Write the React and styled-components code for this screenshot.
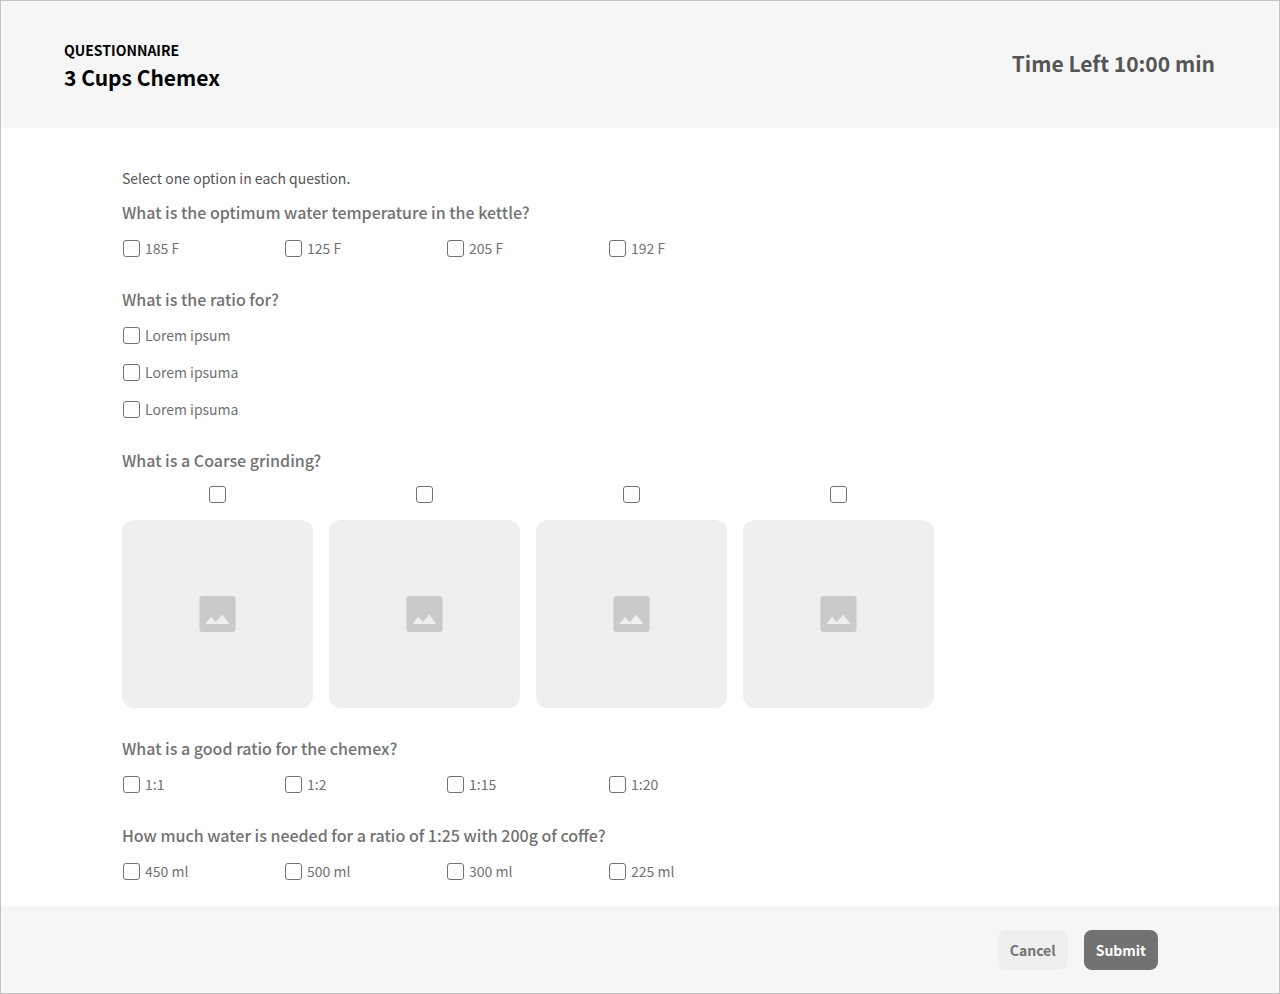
import React from "react";
import styled, { createGlobalStyle } from "styled-components";

const Global = createGlobalStyle`
  *, *::before, *::after { box-sizing: border-box; }
  body { margin: 0; background: #fff; color: #727272; font-family: "Noto Sans CJK SC", "Noto Sans", sans-serif; font-size: 14px; line-height: 20px; }
  h1, h2, p { margin: 0; }
`;
const Page = styled.div`
  min-height: 100vh;
  display: flex;
  flex-direction: column;
  border: 1px solid #c4c4c4;
`;
const Header = styled.header`
  display: flex;
  justify-content: space-between;
  align-items: flex-start;
  padding: 39px 64px 34px 63px;
  background: #f6f6f6;
`;
const Eyebrow = styled.p`
  color: #000;
  font-size: 14px;
  font-weight: 700;
  line-height: 20px;
`;
const Title = styled.h1`
  color: #000;
  font-size: 21px;
  font-weight: 700;
  line-height: 34px;
`;
const Timer = styled.p`
  color: #555;
  font-size: 21px;
  font-weight: 700;
  line-height: 46px;
`;
const Form = styled.form`
  flex: 1;
  display: flex;
  flex-direction: column;
`;
const Questions = styled.main`
  flex: 1;
  padding: 40px 121px 16px;
`;
const Intro = styled.p`
  color: #555;
  margin-bottom: 12px;
`;
const Question = styled.fieldset`
  border: 0;
  margin: 0 0 27px;
  padding: 0;
  min-width: 0;
  &:last-child { margin-bottom: 0; }
`;
const Prompt = styled.legend`
  padding: 0;
  margin-bottom: 12px;
  font-size: 16px;
  font-weight: 500;
  line-height: 24px;
`;
const Options = styled.div`
  display: flex;
  flex-direction: ${(p) => (p.$stacked ? "column" : "row")};
  gap: ${(p) => (p.$stacked ? "13px" : "0")};
`;
const Option = styled.label`
  display: flex;
  align-items: center;
  gap: 5px;
  width: 162px;
  height: 24px;
  padding-left: 1px;
`;
const Check = styled.input`
  appearance: none;
  flex: none;
  width: 17px;
  height: 17px;
  margin: 0;
  border: 1px solid #727272;
  border-radius: 3px;
  background: #fff;
  &:checked { background: #727272; }
`;
const Pictures = styled.div`
  display: flex;
  gap: 16px;
  padding: 2px 0 1px;
`;
const Picture = styled.label`
  display: flex;
  flex-direction: column;
  align-items: center;
  gap: 17px;
  width: 191px;
`;
const Placeholder = styled.span`
  display: flex;
  align-items: center;
  justify-content: center;
  width: 100%;
  height: 188px;
  border-radius: 12px;
  background: #efefef;
`;
const Footer = styled.footer`
  display: flex;
  justify-content: flex-end;
  gap: 16px;
  padding: 24px 121px 23px;
  background: #f6f6f6;
`;
const Button = styled.button`
  height: 40px;
  padding: 0 12px;
  border: 0;
  border-radius: 8px;
  background: ${(p) => (p.$primary ? "#727272" : "#efefef")};
  color: ${(p) => (p.$primary ? "#fff" : "#727272")};
  font: inherit;
  font-weight: 700;
`;

function ImageIcon() {
  return (
    <svg width="37" height="36" viewBox="0 0 37 36" aria-hidden="true">
      <rect x="0.4" width="36.2" height="36" rx="3" fill="#cacaca" />
      <path d="M6.4 28L12.2 20.7L16.6 26.2L23.3 18.6L30.4 28Z" fill="#efefef" />
    </svg>
  );
}

function ChoiceQuestion({ name, prompt, options, stacked }) {
  return (
    <Question>
      <Prompt>{prompt}</Prompt>
      <Options $stacked={stacked}>
        {options.map((text, i) => (
          <Option key={i} htmlFor={`${name}-${i}`}>
            <Check type="checkbox" id={`${name}-${i}`} name={name} />
            {text}
          </Option>
        ))}
      </Options>
    </Question>
  );
}

function PictureQuestion({ name, prompt, count }) {
  return (
    <Question>
      <Prompt>{prompt}</Prompt>
      <Pictures>
        {Array.from({ length: count }, (_, i) => (
          <Picture key={i} htmlFor={`${name}-${i}`}>
            <Check type="checkbox" id={`${name}-${i}`} name={name} aria-label={`Picture ${i + 1}`} />
            <Placeholder><ImageIcon /></Placeholder>
          </Picture>
        ))}
      </Pictures>
    </Question>
  );
}

export default function App() {
  return (
    <Page>
      <Global />
      <Header>
        <div>
          <Eyebrow>QUESTIONNAIRE</Eyebrow>
          <Title>3 Cups Chemex</Title>
        </div>
        <Timer>Time Left 10:00 min</Timer>
      </Header>
      <Form onSubmit={(e) => e.preventDefault()}>
        <Questions>
          <Intro>Select one option in each question.</Intro>
          <ChoiceQuestion name="temperature" prompt="What is the optimum water temperature in the kettle?" options={["185 F", "125 F", "205 F", "192 F"]} />
          <ChoiceQuestion name="purpose" stacked prompt="What is the ratio for?" options={["Lorem ipsum", "Lorem ipsuma", "Lorem ipsuma"]} />
          <PictureQuestion name="grind" prompt="What is a Coarse grinding?" count={4} />
          <ChoiceQuestion name="ratio" prompt="What is a good ratio for the chemex?" options={["1:1", "1:2", "1:15", "1:20"]} />
          <ChoiceQuestion name="water" prompt="How much water is needed for a ratio of 1:25 with 200g of coffe?" options={["450 ml", "500 ml", "300 ml", "225 ml"]} />
        </Questions>
        <Footer>
          <Button type="button">Cancel</Button>
          <Button type="submit" $primary>Submit</Button>
        </Footer>
      </Form>
    </Page>
  );
}
